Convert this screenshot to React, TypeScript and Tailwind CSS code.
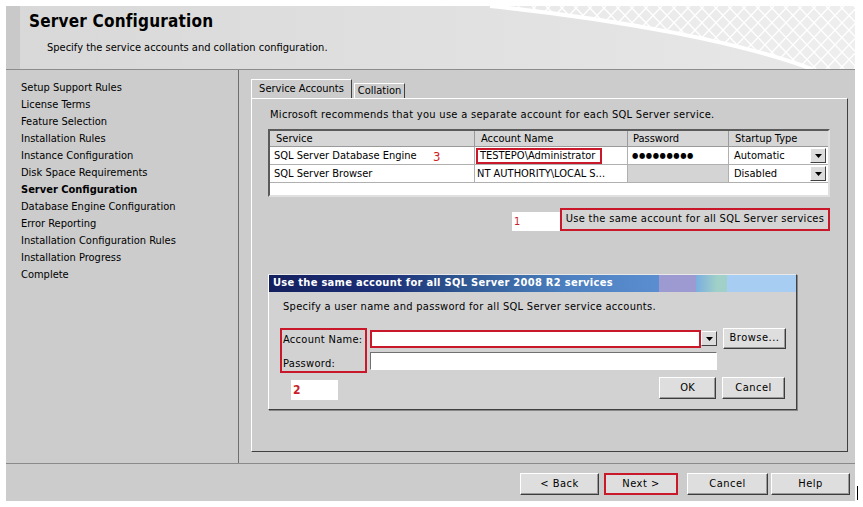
import React from 'react';

const font = "font-['DejaVu_Sans_Condensed','Liberation_Sans',sans-serif]";

const navItems = [
  'Setup Support Rules',
  'License Terms',
  'Feature Selection',
  'Installation Rules',
  'Instance Configuration',
  'Disk Space Requirements',
  'Server Configuration',
  'Database Engine Configuration',
  'Error Reporting',
  'Installation Configuration Rules',
  'Installation Progress',
  'Complete',
];

const btn =
  'flex items-center justify-center bg-[#dedede] border border-t-white border-l-white border-r-[#3c3c3c] border-b-[#3c3c3c] shadow-[inset_-1px_-1px_0_#9a9a9a] text-[11px] text-black';

const DropArrow = () => (
  <div className="flex h-[15px] w-[16px] items-center justify-center bg-[#dcdcdc] border border-t-white border-l-white border-r-[#404040] border-b-[#404040]">
    <svg width="7" height="4" viewBox="0 0 7 4">
      <path d="M0 0h7L3.5 4z" fill="#000" />
    </svg>
  </div>
);

const HeaderMesh = () => {
  const lines: React.ReactNode[] = [];
  for (let i = 0; i < 30; i++) {
    const x = 470 + i * 14;
    lines.push(<line key={'a' + i} x1={x} y1={0} x2={x + 60} y2={63} />);
    lines.push(<line key={'b' + i} x1={x + 60} y1={0} x2={x} y2={63} />);
  }
  return (
    <svg className="absolute left-0 top-0" width="849" height="63" viewBox="0 0 849 63">
      <defs>
        <clipPath id="meshClip">
          <path d="M484 0 C 620 14, 740 38, 806 63 L 849 63 L 849 0 Z" />
        </clipPath>
      </defs>
      <path d="M484 0 C 620 14, 740 38, 806 63 L 849 63 L 849 0 Z" fill="#ffffff" fillOpacity="0.25" />
      <g clipPath="url(#meshClip)" stroke="#ffffff" strokeWidth="1.4" strokeOpacity="0.95">
        {lines}
      </g>
      <path d="M484 0 C 620 14, 740 38, 806 63" fill="none" stroke="#ffffff" strokeWidth="4" />
    </svg>
  );
};

export default function App() {
  return (
    <div className={`min-h-[507px] w-[863px] bg-white pt-[6px] pl-[6px] ${font}`}>
      <div className="flex h-[495px] w-[849px] flex-col bg-[#cccccc]">
        {/* Header */}
        <div className="relative flex h-[64px] border-b border-[#8c8c8c] bg-gradient-to-r from-[#d8d8d8] via-[#e0e0e0] to-[#e8e8e8]">
          <HeaderMesh />
          <div className="w-[14px] bg-[#c9c9c9]" />
          <div className="relative pl-[9px] pt-[5px]">
            <div className="text-[17px] font-bold leading-[20px] tracking-[0.2px] text-black">Server Configuration</div>
            <div className="mt-[10px] pl-[18px] text-[11px] leading-[14px] text-black">
              Specify the service accounts and collation configuration.
            </div>
          </div>
        </div>

        {/* Middle */}
        <div className="flex h-[393px]">
          <div className="w-[233px] border-r border-[#6e6e6e] pl-[15px] pt-[9px]">
            {navItems.map((item) => (
              <div
                key={item}
                className={`h-[17px] text-[11px] leading-[17px] text-black ${item === 'Server Configuration' ? 'font-bold' : ''}`}
              >
                {item}
              </div>
            ))}
          </div>

          <div className="flex-1 pl-[12px] pt-[10px]">
            {/* Tabs */}
            <div className="flex h-[18px] items-end">
              <div className="relative z-10 flex h-[19px] w-[101px] items-center justify-center border border-b-0 border-t-white border-l-white border-r-[#404040] bg-[#cccccc] text-[11px] text-black">
                Service Accounts
              </div>
              <div className="ml-[2px] flex h-[15px] w-[51px] items-center justify-center border border-b-0 border-t-white border-l-white border-r-[#404040] text-[11px] text-black">
                Collation
              </div>
            </div>

            {/* Tab panel */}
            <div className="h-[354px] w-[597px] border border-t-white border-l-white border-r-[#404040] border-b-[#404040] pt-[9px]">
              <div className="pl-[18px] text-[11px] leading-[14px] tracking-[0.3px] text-black">
                Microsoft recommends that you use a separate account for each SQL Server service.
              </div>

              {/* Table */}
              <div className="ml-[16px] mt-[7px] h-[68px] w-[562px] border-2 border-t-[#5a5a5a] border-l-[#5a5a5a] border-r-[#e0e0e0] border-b-[#e0e0e0] bg-white">
                <div className="flex h-[16px] bg-[#d6d6d6] text-[11px] leading-[16px] text-black">
                  <div className="w-[205px] border-r border-b border-[#9a9a9a] pl-[6px]">Service</div>
                  <div className="w-[153px] border-r border-b border-[#9a9a9a] pl-[6px]">Account Name</div>
                  <div className="w-[101px] border-r border-b border-[#9a9a9a] pl-[5px]">Password</div>
                  <div className="flex-1 border-b border-[#9a9a9a] pl-[6px]">Startup Type</div>
                </div>
                <div className="flex h-[18px] border-b border-[#b0b0b0] text-[11px] leading-[18px] text-black">
                  <div className="relative w-[205px] border-r border-[#b0b0b0] pl-[4px]">
                    SQL Server Database Engine
                    <span className="absolute left-[163px] top-[1px] text-[13px] text-[#d02020]">3</span>
                  </div>
                  <div className="w-[153px] border-r border-[#b0b0b0] pl-[1px] pt-[1px]">
                    <div className="h-[16px] w-[126px] border-2 border-[#c8182a] pl-[2px] leading-[12px]">TESTEPO\Administrator</div>
                  </div>
                  <div className="w-[101px] border-r border-[#b0b0b0] pl-[4px] text-[8px] tracking-[0.6px]">●●●●●●●●●</div>
                  <div className="flex flex-1 items-center justify-between pl-[5px] pr-[2px]">
                    <span>Automatic</span>
                    <DropArrow />
                  </div>
                </div>
                <div className="flex h-[18px] border-b border-[#b0b0b0] text-[11px] leading-[18px] text-black">
                  <div className="w-[205px] border-r border-[#b0b0b0] pl-[4px]">SQL Server Browser</div>
                  <div className="w-[153px] border-r border-[#b0b0b0] pl-[2px]">NT AUTHORITY\LOCAL S...</div>
                  <div className="w-[101px] border-r border-[#b0b0b0] bg-[#d4d4d4]" />
                  <div className="flex flex-1 items-center justify-between pl-[5px] pr-[2px]">
                    <span>Disabled</span>
                    <DropArrow />
                  </div>
                </div>
              </div>

              {/* Same account button */}
              <div className="mt-[11px] flex justify-end pr-[17px]">
                <div className="mt-[4px] h-[19px] w-[48px] bg-white pl-[2px] text-[11px] leading-[19px] text-[#c81e28]">1</div>
                <div className="flex h-[23px] w-[270px] items-center justify-center border-2 border-[#c8182a] bg-[#d4d4d4] text-[11px] tracking-[0.3px] text-black">
                  Use the same account for all SQL Server services
                </div>
              </div>

              {/* Dialog */}
              <div className="ml-[16px] mt-[43px] h-[136px] w-[529px] border border-t-[#e8e8e8] border-l-white border-r-[#404040] border-b-[#404040] bg-[#d2d2d2] shadow-[1px_1px_0_#888]">
                <div className="flex h-[17px] items-center bg-[linear-gradient(to_right,#14205e_0%,#1c2f78_22%,#2e5690_36%,#4b7fbf_56%,#5b8ed0_74%,#9c9ad0_74%,#9c9ad0_81%,#7aaee0_81%,#a0d0c8_85%,#a0d0c8_87%,#a8cdf2_87%,#a8cdf2_100%)] pl-[4px] text-[11px] font-bold tracking-[0.3px] text-white">
                  Use the same account for all SQL Server 2008 R2 services
                </div>
                <div className="pl-[14px] pt-[8px] text-[11px] leading-[14px] tracking-[0.3px] text-black">
                  Specify a user name and password for all SQL Server service accounts.
                </div>
                <div className="mt-[14px] flex pl-[11px]">
                  <div className="h-[45px] w-[87px] border-2 border-[#c8182a] pl-[1px] pt-[2px] text-[11px] leading-[24px] tracking-[0.3px] text-black">
                    <div className="leading-[16px]">Account Name:</div>
                    <div className="mt-[8px] leading-[16px]">Password:</div>
                  </div>
                  <div className="ml-[3px] flex flex-col">
                    <div className="flex items-center">
                      <div className="mt-[1px] h-[18px] w-[331px] border-2 border-[#c8182a] bg-white" />
                      <DropArrow />
                      <div className={`${btn} ml-[6px] h-[21px] w-[63px] tracking-[0.5px]`}>Browse...</div>
                    </div>
                    <div className="mt-[3px] h-[18px] w-[347px] border border-t-[#707070] border-l-[#707070] border-r-white border-b-white bg-white" />
                  </div>
                </div>
                <div className="mt-[4px] flex items-start pl-[22px]">
                  <div className="mt-[3px] h-[20px] w-[47px] bg-white pl-[2px] text-[12px] font-bold leading-[20px] text-[#c81e28]">2</div>
                  <div className={`${btn} ml-[321px] h-[22px] w-[57px]`}>OK</div>
                  <div className={`${btn} ml-[6px] h-[22px] w-[63px] tracking-[0.5px]`}>Cancel</div>
                </div>
              </div>
            </div>
          </div>
        </div>

        {/* Footer */}
        <div className="flex h-[38px] border-t border-[#8a8a8a] pt-[9px]">
          <div className={`${btn} ml-[514px] h-[22px] w-[79px] tracking-[0.5px]`}>&lt; Back</div>
          <div className="ml-[5px] flex h-[22px] w-[74px] items-center justify-center border-2 border-[#c8182a] bg-[#dedede] text-[11px] tracking-[0.5px] text-black">
            Next &gt;
          </div>
          <div className={`${btn} ml-[9px] h-[22px] w-[81px] tracking-[0.5px]`}>Cancel</div>
          <div className={`${btn} ml-[3px] h-[22px] w-[79px] tracking-[0.5px]`}>Help</div>
        </div>
      </div>
      <div className="absolute left-[857px] top-[486px] h-[14px] w-px bg-black" />
    </div>
  );
}
